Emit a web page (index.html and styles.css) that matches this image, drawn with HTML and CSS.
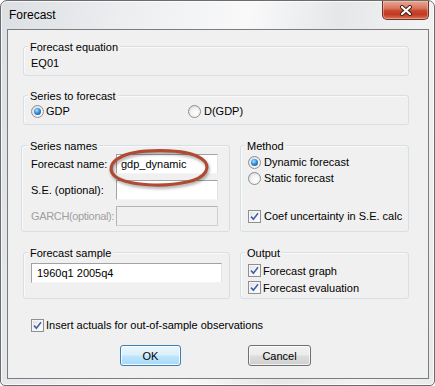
FILE: index.html
```html
<!DOCTYPE html>
<html>
<head>
<meta charset="utf-8">
<link rel="stylesheet" href="styles.css">
</head>
<body>
<div class="window">
  <div class="titlebar">
    <span class="title">Forecast</span>
    <span class="close">
      <svg width="14" height="11" viewBox="0 0 14 11"><path d="M3 2 L11 9 M11 2 L3 9" stroke="#3b1c15" stroke-width="4" stroke-linecap="round"/><path d="M3 2 L11 9 M11 2 L3 9" stroke="#fff" stroke-width="2.2" stroke-linecap="round"/></svg>
    </span>
  </div>
  <div class="client">
    <div class="group g-eq">
      <div class="legend">Forecast equation</div>
      <div class="static">EQ01</div>
    </div>

    <div class="group g-series">
      <div class="legend">Series to forecast</div>
      <div class="series-row">
        <label class="opt opt-gdp"><span class="radio on"></span>GDP</label>
        <label class="opt"><span class="radio"></span>D(GDP)</label>
      </div>
    </div>

    <div class="row row3">
      <div class="group g-names">
        <div class="legend">Series names</div>
        <div class="fields">
          <div class="field"><span class="flabel">Forecast name:</span><span class="edit">gdp_dynamic</span></div>
          <div class="field"><span class="flabel">S.E. (optional):</span><span class="edit"></span></div>
          <div class="field"><span class="flabel disabled">GARCH(optional):</span><span class="edit off"></span></div>
        </div>
      </div>
      <div class="group g-method">
        <div class="legend">Method</div>
        <div class="mbody">
          <label class="opt mrow"><span class="radio on"></span>Dynamic forecast</label>
          <label class="opt mrow"><span class="radio"></span>Static forecast</label>
          <label class="opt mrow coef"><span class="check"><svg width="9" height="9" viewBox="0 0 9 9"><path d="M1 4.6 L3.4 7.2 L8 1.2" fill="none" stroke="#fff" stroke-width="3"/><path d="M1 4.6 L3.4 7.2 L8 1.2" fill="none" stroke="#4660a6" stroke-width="1.7"/></svg></span>Coef uncertainty in S.E. calc</label>
        </div>
      </div>
    </div>

    <div class="row row4">
      <div class="group g-sample">
        <div class="legend">Forecast sample</div>
        <span class="edit wide">1960q1 2005q4</span>
      </div>
      <div class="group g-output">
        <div class="legend">Output</div>
        <div class="obody">
          <label class="opt orow"><span class="check"><svg width="9" height="9" viewBox="0 0 9 9"><path d="M1 4.6 L3.4 7.2 L8 1.2" fill="none" stroke="#fff" stroke-width="3"/><path d="M1 4.6 L3.4 7.2 L8 1.2" fill="none" stroke="#4660a6" stroke-width="1.7"/></svg></span>Forecast graph</label>
          <label class="opt orow"><span class="check"><svg width="9" height="9" viewBox="0 0 9 9"><path d="M1 4.6 L3.4 7.2 L8 1.2" fill="none" stroke="#fff" stroke-width="3"/><path d="M1 4.6 L3.4 7.2 L8 1.2" fill="none" stroke="#4660a6" stroke-width="1.7"/></svg></span>Forecast evaluation</label>
        </div>
      </div>
    </div>

    <label class="opt insert"><span class="check"><svg width="9" height="9" viewBox="0 0 9 9"><path d="M1 4.6 L3.4 7.2 L8 1.2" fill="none" stroke="#fff" stroke-width="3"/><path d="M1 4.6 L3.4 7.2 L8 1.2" fill="none" stroke="#4660a6" stroke-width="1.7"/></svg></span>Insert actuals for out-of-sample observations</label>

    <div class="buttons">
      <span class="btn default">OK</span>
      <span class="btn cancel">Cancel</span>
    </div>
  </div>

  <svg class="annot" width="112" height="50" viewBox="0 0 112 50">
    <path d="M14 12 C 30 2, 82 2, 97 13 C 107 20, 102 32, 82 36 C 60 41, 24 40, 11 31 C 3 25, 5 16, 16 11" fill="none" stroke="#b04a32" stroke-width="3.2" stroke-linecap="round"/>
  </svg>
</div>
</body>
</html>
```

FILE: styles.css
```css
* { box-sizing: border-box; }
html, body { margin: 0; padding: 0; }
body {
  width: 435px;
  height: 386px;
  overflow: hidden;
  background: #ffffff;
  font-family: "Liberation Sans", Arial, sans-serif;
  font-size: 11px;
  color: #000;
}
.window {
  position: relative;
  width: 435px;
  height: 386px;
  border: 1px solid #6c6c6c;
  border-radius: 7px 7px 5px 5px;
  background: linear-gradient(100deg, #dcdfe3 0%, #eceef0 25%, #f9f9fa 50%, #e5e7e9 68%, #f1f2f3 85%, #e8eaec 100%);
  box-shadow: inset 0 0 0 1px rgba(255,255,255,0.75);
  display: flex;
  flex-direction: column;
}
.titlebar {
  height: 28px;
  display: flex;
  justify-content: space-between;
  align-items: flex-start;
  flex: none;
}
.title {
  font-size: 12px;
  line-height: 14px;
  margin: 7px 0 0 8px;
  color: #000;
}
.close {
  width: 47px;
  height: 19px;
  margin-right: 5px;
  border: 1px solid #6e3024;
  border-top: none;
  border-radius: 0 0 5px 5px;
  background: linear-gradient(#e8a896 0%, #d9775f 40%, #c8442a 55%, #c13c22 75%, #d4745a 100%);
  box-shadow: inset 0 0 0 1px rgba(255,210,195,0.45);
  display: flex;
  align-items: center;
  justify-content: center;
}
.client {
  flex: 1;
  margin: 0 5px 6px 6px;
  border: 1px solid #7c7c7c;
  background: #f0f0f0;
  padding: 16px 0 0 15px;
  display: flex;
  flex-direction: column;
  align-items: flex-start;
}
.group {
  border: 1px solid #d5dfe5;
  border-radius: 3px;
  padding: 0 7px;
  box-shadow: inset 1px 1px 0 rgba(255,255,255,0.6);
}
.legend {
  width: fit-content;
  margin: -7px 0 0 -3px;
  padding: 0 2px;
  background: #f0f0f0;
  line-height: 14px;
  height: 14px;
  white-space: nowrap;
}
.static { line-height: 14px; margin-top: 2px; }

.g-eq { width: 386px; padding-bottom: 5px; }
.g-series { width: 386px; margin-top: 19px; padding-bottom: 6px; }
.series-row { display: flex; height: 14px; align-items: center; margin-top: 1px; }
.opt { display: flex; align-items: center; gap: 3px; line-height: 14px; white-space: nowrap; }
.opt-gdp { width: 157px; gap: 2px; }

.row { display: flex; gap: 10px; margin-top: 20px; align-items: stretch; }
.g-names { width: 209px; margin-left: -2px; padding: 0 11px 5px 9px; }
.fields { display: flex; flex-direction: column; gap: 6px; margin-top: 1px; }
.field { display: flex; align-items: center; height: 20px; }
.flabel { width: 85px; flex: none; white-space: nowrap; }
.flabel.disabled { color: #a0a0a0; letter-spacing: -0.35px; }
.edit {
  display: block;
  width: 102px;
  height: 20px;
  background: #fff;
  border: 1px solid;
  border-color: #a3a3a3 #e3e3e3 #f4f4f4 #a3a3a3;
  padding: 0 4px;
  line-height: 18px;
}
.edit.off { background: #f0f0f0; border-color: #b4b4b4 #cfcfcf #cfcfcf #b4b4b4; }
.edit.wide { width: 191px; padding-left: 5px; margin-top: 3px; }

.g-method { width: 169px; padding-bottom: 7px; }
.mbody { margin-top: 1px; }
.mrow { height: 16px; }
.coef { margin-top: 22px; }

.g-sample { width: 207px; padding-bottom: 15px; }
.g-output { width: 169px; padding-bottom: 2px; }
.obody { margin-top: 2px; }
.orow { height: 17px; gap: 2px; }

.radio {
  position: relative;
  width: 13px;
  height: 13px;
  flex: none;
  border-radius: 50%;
  border: 1px solid #8d8e8f;
  background: radial-gradient(circle at 60% 65%, #ffffff 0%, #f3f3f3 45%, #cfcfcf 100%);
}
.radio.on::after {
  content: "";
  position: absolute;
  left: 2px;
  top: 2px;
  width: 7px;
  height: 7px;
  border-radius: 50%;
  background: radial-gradient(circle at 40% 35%, #b5e3ff 0%, #3a96e4 40%, #175aa0 80%, #0e3f78 100%);
}
.check {
  width: 13px;
  height: 13px;
  flex: none;
  border: 1px solid #8e8f8f;
  background: linear-gradient(135deg, #dcdfe4 0%, #f4f5f7 60%, #ffffff 100%);
  box-shadow: inset 0 0 0 1px #f6f6f6;
  display: flex;
  align-items: center;
  justify-content: center;
}
.insert { margin-top: 19px; margin-left: 8px; height: 14px; gap: 2px; }

.buttons { display: flex; gap: 67px; margin-top: 13px; padding-left: 97px; }
.btn {
  height: 21px;
  display: flex;
  align-items: center;
  justify-content: center;
  border-radius: 3px;
  border: 1px solid #707070;
  background: linear-gradient(#f2f2f2 0%, #ebebeb 48%, #dddddd 52%, #cfcfcf 100%);
  box-shadow: inset 0 0 0 1px rgba(255,255,255,0.7);
}
.btn.default {
  width: 61px;
  border-color: #3c7fb1;
  background: linear-gradient(#eaf6fd 0%, #d9f0fc 48%, #bee6fd 52%, #a7d9f5 100%);
  box-shadow: inset 0 0 0 1px rgba(255,255,255,0.85);
}
.btn.cancel { width: 63px; }

.annot {
  position: absolute;
  left: 104px;
  top: 145px;
  filter: drop-shadow(1px 2px 1.5px rgba(0,0,0,0.35));
}
```
